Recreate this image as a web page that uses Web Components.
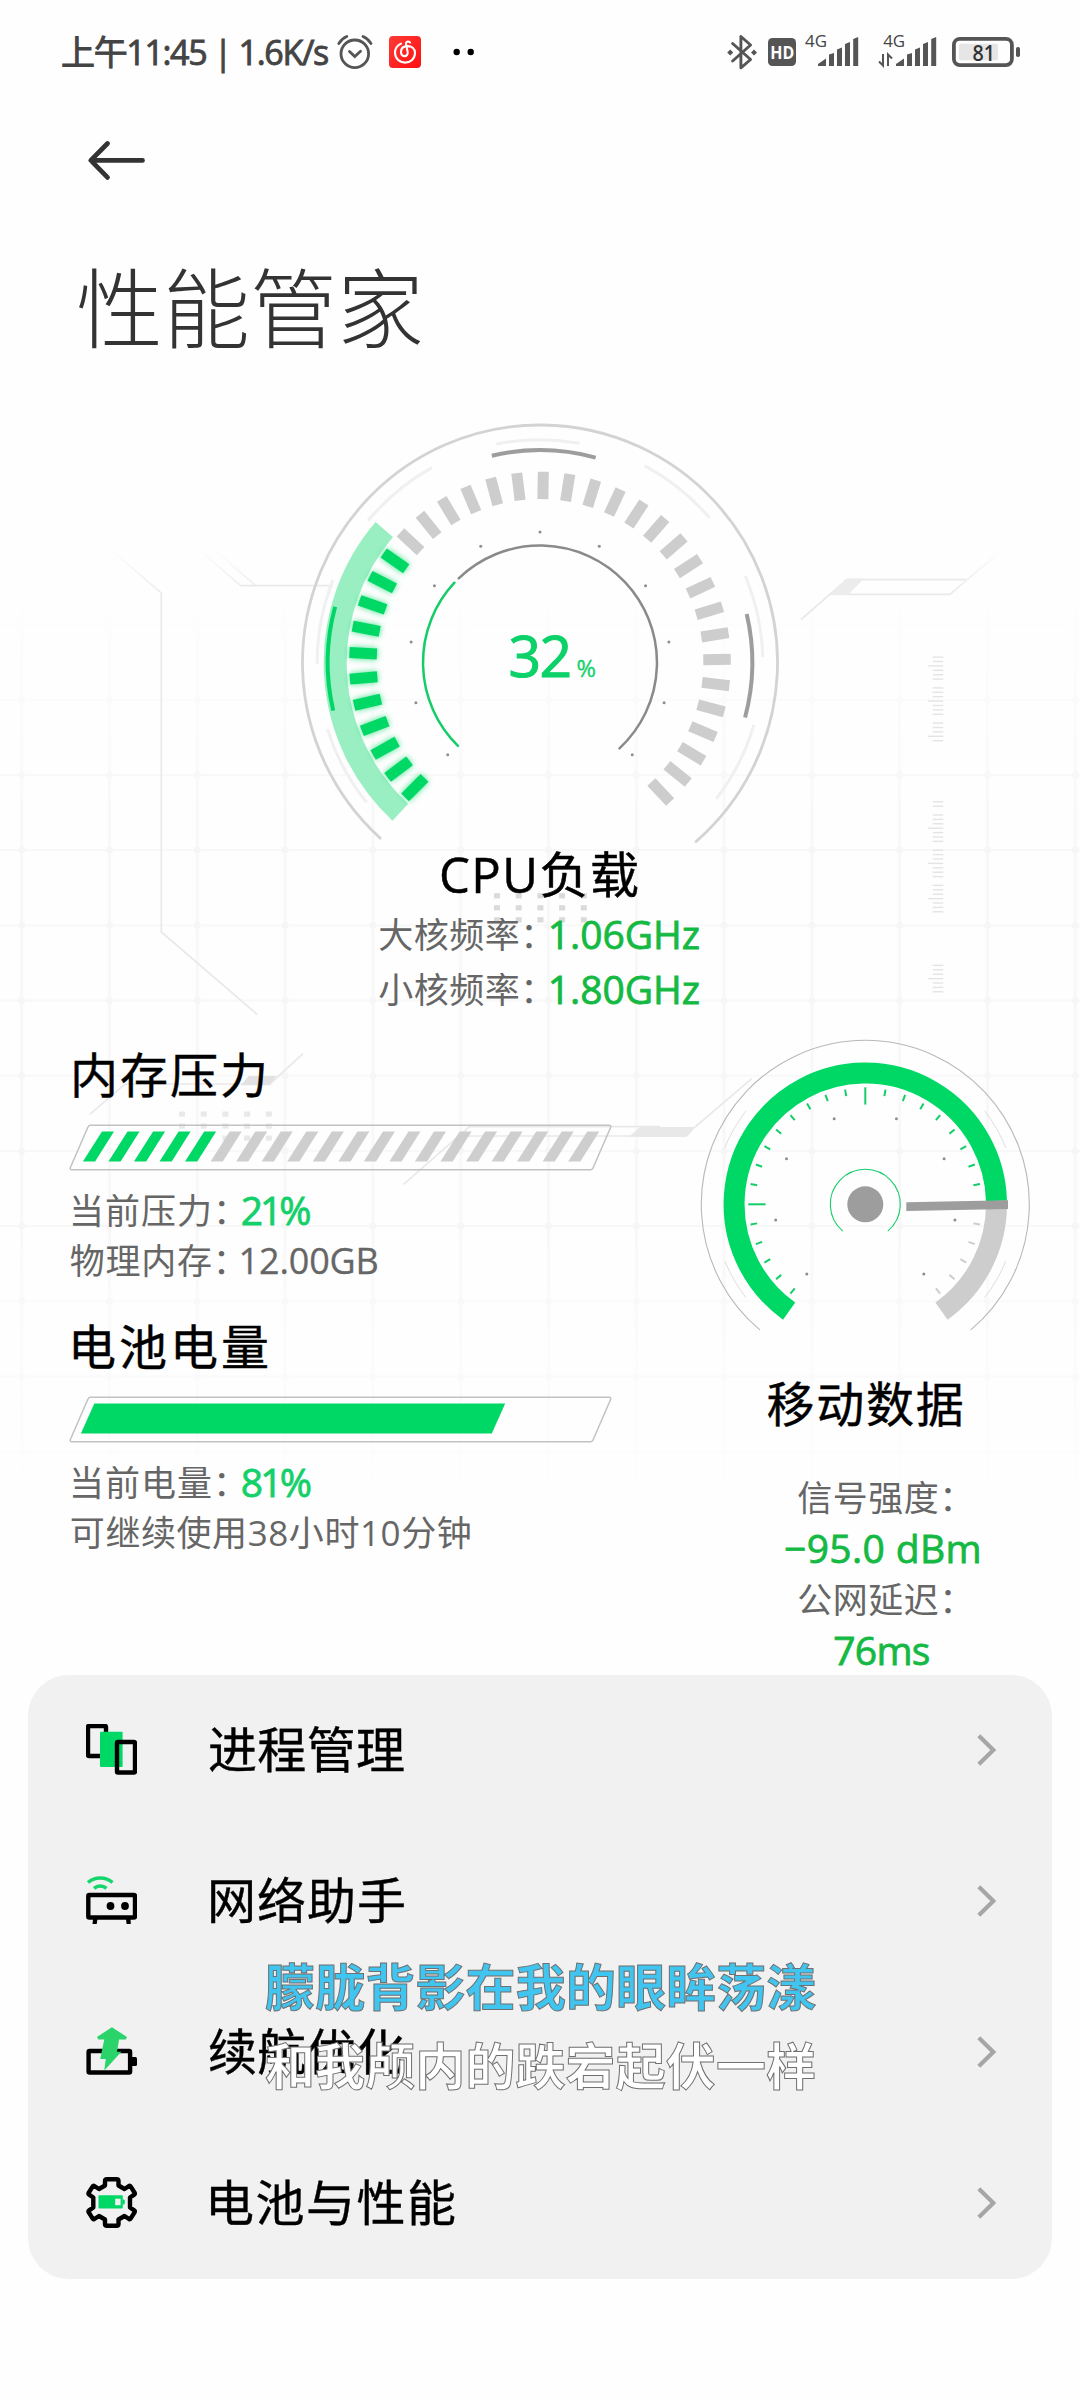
<!DOCTYPE html>
<html lang="zh-CN">
<head>
<meta charset="utf-8">
<title>性能管家</title>
<style>
html,body{margin:0;padding:0;background:#fefefe}
body{width:1080px;height:2400px;overflow:hidden;font-family:"Open Sans","Noto Sans CJK SC",sans-serif;color:#000}
</style>
</head>
<body>
<performance-page></performance-page>
<script>
const rad = a => a * Math.PI / 180;
/* polar point: angle in degrees, 0 is up, clockwise positive */
const pt = (cx, cy, r, a) => [cx + r * Math.sin(rad(a)), cy - r * Math.cos(rad(a))].map(v => +v.toFixed(2));
const arc = (cx, cy, r, a, b, stroke, w, cap = 'butt') => {
  const [x1, y1] = pt(cx, cy, r, a), [x2, y2] = pt(cx, cy, r, b);
  return `<path d="M${x1} ${y1}A${r} ${r} 0 ${b - a > 180 ? 1 : 0} 1 ${x2} ${y2}" fill="none" stroke="${stroke}" stroke-width="${w}" stroke-linecap="${cap}"/>`;
};
const spoke = (cx, cy, r1, r2, a, stroke, w, cap = 'butt') => {
  const [x1, y1] = pt(cx, cy, r1, a), [x2, y2] = pt(cx, cy, r2, a);
  return `<path d="M${x1} ${y1}L${x2} ${y2}" stroke="${stroke}" stroke-width="${w}" stroke-linecap="${cap}"/>`;
};
const dot = (cx, cy, r, a) => { const [x, y] = pt(cx, cy, r, a); return `<circle cx="${x}" cy="${y}" r="1.5" fill="#8e8e8e"/>`; };
const svg = (x, y, w, h, body) => `<svg viewBox="${x} ${y} ${w} ${h}" width="${w}" height="${h}" fill="none">${body}</svg>`;

class BaseElement extends HTMLElement {
  connectedCallback() {
    if (this.shadowRoot) return;
    this.attachShadow({ mode: 'open' }).innerHTML = `<style>:host{display:block}svg{display:block;flex:none}${this.css || ''}</style>` + this.view();
  }
}

/* One line of text whose visible ink starts at the left edge and spans w pixels. */
class InkText extends HTMLElement {
  connectedCallback() {
    if (this.shadowRoot) return;
    const w = +this.getAttribute('w');
    this.attachShadow({ mode: 'open' }).innerHTML =
      `<style>:host{display:block;flex:none;width:${w}px;white-space:pre}span{display:block}</style><span><slot></slot></span>`;
    const cs = getComputedStyle(this), ctx = InkText.ctx || (InkText.ctx = document.createElement('canvas').getContext('2d'));
    ctx.font = `${cs.fontWeight} ${cs.fontSize} ${cs.fontFamily}`;
    const text = this.textContent, m = ctx.measureText(text);
    const ink = m.actualBoundingBoxLeft + m.actualBoundingBoxRight;
    const s = this.shadowRoot.querySelector('span').style;
    s.letterSpacing = ((w - ink) / (text.length - 1)).toFixed(3) + 'px';
    s.marginLeft = m.actualBoundingBoxLeft.toFixed(2) + 'px';
  }
}
customElements.define('ink-text', InkText);

customElements.define('status-bar', class extends BaseElement {
  css = `:host{height:104px;display:flex;align-items:center;color:#444;padding-left:62px;box-sizing:border-box}
    ink-text{font-size:34px;line-height:104px;-webkit-text-stroke:.9px #444}
    .r{margin-left:auto;display:flex;padding-right:58px}
    text{font-family:"Open Sans",sans-serif}`;
  bars(x) {
    return [[0, 58.5, 61.5], [11, 53, 54.5], [19, 47.5, 49.5], [27, 42, 44], [35.2, 37, 39]].map(([d, t, l], i) =>
      `<path d="M${x + d} 66V${i ? l : 64}L${x + d + (i ? 5 : 8)} ${i ? t : 58.5}V66z" fill="#555"/>`).join('');
  }
  view() {
    return `<ink-text w="266">上午11:45 | 1.6K/s</ink-text>
    ${svg(328, 34, 56, 36, `<g stroke="#555" stroke-width="2.8" stroke-linecap="round"><circle cx="354.8" cy="53.8" r="13.8"/><path d="M338.8 43.5q3-5 8-7M371 43.5q-3-5-8-7M349.5 51.5l5.3 5 5.7-5.2"/></g>`)}
    ${svg(384, 34, 92, 36, `<defs><linearGradient id="g" x1="0" y1="0" x2="1" y2="1"><stop stop-color="#fe3a36"/><stop offset="1" stop-color="#fe0f12"/></linearGradient></defs>
      <rect x="389" y="36" width="32" height="32" rx="4" fill="url(#g)"/>
      <path d="M401 43.6c-4 2-6 5-6 9 0 6 4.5 10 10 10s10-4 10-9.5c0-4.5-3.5-7-7.5-7-5 0-6.5 3-6.5 6 0 2.5 1.5 4 3.5 4s3.5-1.7 3.2-4l-1.7-8c-.3-2.3 2-3.5 4-1.6" stroke="#fff" stroke-width="2.1" stroke-linecap="round"/>
      <circle cx="456.7" cy="52" r="3.2" fill="#000"/><circle cx="470.7" cy="52" r="3.2" fill="#000"/>`)}
    <div class="r">${svg(726, 22, 296, 60, `
      <path d="M732.6 43.5l18 16-9.7 8.300V36.500l9.700 8.500-18 16" stroke="#555" stroke-width="2.9" stroke-linejoin="round" stroke-linecap="round"/>
      <path d="M727.2 52.500l3-3 3 3-3 3zM751 52.500l3-3 3 3-3 3z" fill="#555"/>
      <rect x="768" y="38" width="28" height="28" rx="4.5" fill="#555"/>
      <text x="770.2" y="59" font-size="18" font-weight="700" fill="#fff" textLength="24" lengthAdjust="spacingAndGlyphs">HD</text>
      <text x="805" y="47" font-size="16.5" fill="#444" textLength="22" lengthAdjust="spacingAndGlyphs">4G</text>${this.bars(818)}
      <text x="883.2" y="47" font-size="16.5" fill="#444" textLength="22" lengthAdjust="spacingAndGlyphs">4G</text>${this.bars(896)}
      <path d="M883 54v11.5l-4-4M888 66V54.500l4 4" stroke="#555" stroke-width="2"/>
      <rect x="953.9" y="38.900" width="58" height="26.200" rx="6" stroke="#555" stroke-width="3.800"/>
      <rect x="959" y="43.700" width="39" height="16.600" rx="2" fill="#e6e6e6"/>
      <rect x="1016" y="47" width="4" height="10" rx="1.800" fill="#555"/>
      <text x="972.500" y="61" font-size="22" font-weight="600" fill="#333" textLength="22.500" lengthAdjust="spacingAndGlyphs">81</text>`)}</div>`;
  }
});

customElements.define('page-header', class extends BaseElement {
  css = `:host{height:296px}.nav{height:112px;padding-left:86px;display:flex;align-items:center}
    ink-text{margin-left:79px;font-size:87px;font-weight:300;line-height:176px;color:#333;font-family:"Noto Sans CJK SC",sans-serif}`;
  view() {
    return `<div class="nav">${svg(86, 138, 62, 44, `<path d="M142.500 160.400H91M107.500 143.500L90.800 160.400l16.700 17" stroke="#333" stroke-width="4.800" stroke-linecap="round" stroke-linejoin="round"/>`)}</div>
    <ink-text w="342">${this.textContent}</ink-text>`;
  }
});

customElements.define('metric-line', class extends BaseElement {
  css = `:host{display:flex;height:var(--h,50px);color:#666}
    ink-text{line-height:calc(var(--h,50px) - 2px)}
    .l{font-size:35px}.v{font-size:39px;line-height:calc(var(--h,50px) - 4px);color:var(--vc,#14b944);margin-left:var(--gap,17px);-webkit-text-stroke:.8px currentColor}
    .v.plain{font-size:36px;color:#666;line-height:calc(var(--h,50px) - 2px);-webkit-text-stroke:.3px currentColor}`;
  view() {
    const a = n => this.getAttribute(n);
    return (a('label') ? `<ink-text class="l" w="${a('lw') || 153}">${a('label')}</ink-text>` : '') +
      (a('value') ? `<ink-text class="v ${a('kind') || ''}" w="${a('vw')}" ${a('label') ? '' : 'style="margin-left:0"'}>${a('value')}</ink-text>` : '');
  }
});

customElements.define('cpu-gauge', class extends BaseElement {
  css = `:host{padding-left:280px}text{font-family:"Open Sans",sans-serif;fill:#0dd169}
    .t{margin-left:161px;font-size:49px;line-height:56px;height:57px;margin-bottom:5px;-webkit-text-stroke:.5px #000}
    metric-line{--h:55px;--gap:18.4px;margin-left:99.3px}`;
  view() {
    const X = 540, Y = 662.5; let g = '', green = '';
    g += arc(X, Y, 237.5, -137.7, 138.9, '#d3d3d3', 2.8, 'round');
    [[-128.9, -107.4], [-90.4, -68.3], [-50.5, -29], [-11.3, 10.2], [28, 49.5], [67.1, 88.6], [106.3, 127.7]].forEach(([a, b]) => g += arc(X, Y, 222.8, a, b, '#f0f0f0', 3));
    g += arc(X, Y, 212.3, -13.1, 15.2, '#9d9d9d', 4) + arc(X, Y, 212.3, 76.8, 105, '#9d9d9d', 4);
    g += arc(X, Y, 204.8, -137, -49.5, '#99efc2', 23);
    g += arc(X, Y, 212.3, -103.1, -74.8, '#00d566', 4);
    for (let i = 0; i < 35; i++) {
      const s = spoke(X, Y, 163.3, 190.8, -135 + i * 8, i < 11 ? '#00d866' : '#cdcdcd', 11);
      i < 11 ? green += s : g += s;
    }
    g += `<g filter="url(#b)" opacity=".75">${green}</g>${green}`;
    for (let i = -5; i <= 5; i++) g += dot(X, Y, 130.5, i * 27);
    g += arc(X, Y, 117, -44, 137.2, '#8a8a8a', 2.5, 'round') + arc(X, Y, 117, -135.5, -47, '#14cd69', 2.5, 'round');
    return `${svg(280, 400, 520, 446, `<defs><filter id="b" x="-20%" y="-20%" width="140%" height="140%"><feGaussianBlur stdDeviation="3"/></filter></defs>${g}
      <text x="508.5" y="677" font-size="57" textLength="63.5" stroke="#0dd169" stroke-width="1.1">32</text><text x="576.5" y="677.3" font-size="23.5" stroke="#0dd169" stroke-width=".3">%</text>`)}
      <ink-text class="t" w="197">CPU负载</ink-text>
      <metric-line label="大核频率：" value="1.06GHz" vw="148"></metric-line>
      <metric-line label="小核频率：" value="1.80GHz" vw="148"></metric-line>`;
  }
});

customElements.define('meter-block', class extends BaseElement {
  css = `:host{height:272px;box-sizing:border-box;padding-top:27.5px;--vc:#14d06a;--gap:16.8px}
    .t{margin-left:74px;font-size:48px;height:60px;line-height:58px;-webkit-text-stroke:.4px #000}
    ::slotted(metric-line){margin-left:71.8px}`;
  view() {
    let g = `<path d="M90.5 19.2H609q2.5 0 1.5 2.5L593 62q-.8 1.800-2.500 1.800H72q-2.500 0-1.500-2.500L88 21q.8-1.800 2.500-1.800z" stroke="#c2c2c2" stroke-width="1.500"/>`;
    if (this.getAttribute('type') === 'ticks')
      for (let i = 0; i < 20; i++) { const x = 82.9 + i * 25.54; g += `<path d="M${x} 55.5L${x + 19.1} 25.5h12L${x + 12.2} 55.5z" fill="${i < 5 ? '#00d866' : '#cecece'}"/>`; }
    else g += `<path d="M94.3 25.5H505.2L491.8 55.5H80.9z" fill="#00d866"/>`;
    return `<ink-text class="t" w="${this.getAttribute('tw')}">${this.getAttribute('name')}</ink-text>${svg(0, 0, 640, 81, g)}<slot></slot>`;
  }
});

customElements.define('network-gauge', class extends BaseElement {
  css = `.t{margin:29.5px 0 38px 117.5px;font-size:48px;height:60px;line-height:58px;-webkit-text-stroke:.4px #000}
    metric-line{--h:51px;--vc:#14b944}`;
  view() {
    const X = 865.3, Y = 1204.3;
    let g = arc(X, Y, 164, -140, 140, '#b8b8b8', 1.1);
    [[-128, -112], [-68.3, -51.9], [51.9, 68.3], [112, 128]].forEach(([a, b]) => g += arc(X, Y, 151.5, a, b, '#dedede', 1));
    g += arc(X, Y, 131.2, 88, 144.5, '#cdcdcd', 21) + arc(X, Y, 131.2, -144.5, 88.5, '#00d866', 21);
    for (let a = -140; a <= 140; a += 10) {
      if (a === 90) continue;
      g += a % 90 ? spoke(X, Y, 109.8, 116.5, a, a > 90 ? '#cdcdcd' : '#14cd69', 2) : spoke(X, Y, 99.7, 117, a, '#14cd69', 2);
    }
    for (let a = -140; a <= 140; a += 40) g += dot(X, Y, 91, a);
    g += arc(X, Y, 35, -140, 140, '#14cd69', 1.1) + `<circle cx="${X}" cy="${Y}" r="18" fill="#9d9d9d"/>`;
    g += `<path d="M906.3 1202.3L1008 1200.3V1209L906.3 1211z" fill="#9d9d9d"/>`;
    return `${svg(650, 1018, 430, 327, g)}<ink-text class="t" w="194.3">移动数据</ink-text>
      <metric-line style="margin-left:148.3px" label="信号强度："></metric-line>
      <metric-line style="margin-left:135px" value="−95.0 dBm" vw="193.500"></metric-line>
      <metric-line style="margin-left:148.3px" label="公网延迟："></metric-line>
      <metric-line style="margin-left:184.3px" value="76ms" vw="94.500"></metric-line>`;
  }
});

const icons = {
  process: `<rect x="2" y="2" width="18" height="30" rx="1" stroke="#000" stroke-width="4.4"/><rect x="14" y="7.7" width="22.600" height="35.300" rx="1" fill="#00d866"/><rect x="31" y="18" width="18" height="30.500" rx="1" stroke="#000" stroke-width="4.400"/>`,
  router: `<path d="M2 7.500C9 1.500 19.500 1.500 26.500 7.500M8 13.300c3.500-3 9-3 12.500 0" stroke="#14d66c" stroke-width="3.500"/><rect x="2.300" y="20" width="46.700" height="22.500" rx="1" stroke="#000" stroke-width="4.400"/><circle cx="24.500" cy="31" r="3.900" fill="#000"/><circle cx="39" cy="31" r="3.900" fill="#000"/><path d="M7 44h4.500l-.8 5H6.500zM40 44h4.500l.3 5h-4.200z" fill="#000"/>`,
  charge: `<rect x="2.600" y="25" width="41.500" height="21.500" rx="1" stroke="#000" stroke-width="4.400"/><path d="M46 31h3.500q1.500 0 1.500 1.500v6q0 1.500-1.500 1.500H46z" fill="#000"/><path d="M25.900 1.200L41 11l-1.200 2.400h-6.700L31 25.700h4.400L18.300 44.400 19.700 33h-5.500l4.100-19.600h-6L11 11z" fill="#2ad46b"/>`,
  gear: `<path d="M19 4q0-1.800 2-1.800h9.500q2 0 2 1.800V8.500L38.500 12 43 9q1-.6 1.600.4l4 6.300q.6 1.200-.4 1.900L44 20.500v10l4.200 2.900q1 .7.400 1.900l-4 6.300q-.6 1-1.600.4L38.500 39 32.500 42.500V47q0 1.800-2 1.800H21q-2 0-2-1.800V42.500L13 39 8.300 42q-1 .6-1.600-.4l-4-6.300q-.6-1.200.4-1.900L7.300 30.500v-10L3.100 17.600q-1-.7-.4-1.900l4-6.300q.6-1 1.600-.4L13 12l6-3.500z" stroke="#000" stroke-width="4.400" stroke-linejoin="round"/><rect x="12.500" y="18.300" width="24.300" height="13.200" rx="1" fill="#00d866"/><rect x="29.200" y="21.700" width="5.400" height="6.500" fill="#f1f1f1"/><rect x="36.500" y="22.500" width="2.300" height="5" rx="1" fill="#00d866"/>`
};
customElements.define('menu-item', class extends BaseElement {
  css = `:host{display:flex;align-items:center;height:151px;box-sizing:border-box;padding:0 55px 1.5px 58px}
    ink-text{margin-left:var(--x,73px);font-size:49px;line-height:149px;-webkit-text-stroke:.4px #000}.c{margin-left:auto}`;
  view() {
    return `${svg(0, 0, 51, 51, icons[this.getAttribute('icon')])}<ink-text w="${this.getAttribute('w')}">${this.getAttribute('name')}</ink-text>
      <svg class="c" width="22" height="34" viewBox="0 0 22 34" fill="none"><path d="M3.800 2.800L18.300 17 3.800 31.200" stroke="#a6a6a6" stroke-width="4.200"/></svg>`;
  }
});
customElements.define('menu-card', class extends BaseElement {
  css = `:host{margin:0 28px;background:#f1f1f1;border-radius:41px;height:604px}`;
  view() { return '<slot></slot>'; }
});

customElements.define('floating-lyrics', class extends BaseElement {
  css = `:host{position:absolute;left:266px;top:1945px;width:551px;font-family:"Noto Sans CJK SC",sans-serif;font-weight:700;font-size:50px;line-height:79px;-webkit-text-stroke:1px #707070}
    .a{color:#40c4f0}.b{color:#fff}`;
  view() { return `<ink-text class="a" w="549.5">朦胧背影在我的眼眸荡漾</ink-text><ink-text class="b" w="549">和我颅内的跌宕起伏一样</ink-text>`; }
});

customElements.define('tech-backdrop', class extends BaseElement {
  view() {
    let grid = '', s = '';
    for (let x = 21.7; x < 1080; x += 87.8) grid += `<path d="M${x} 590V1500" stroke="#f8f8f8" stroke-width="3"/>`;
    for (let y = 624.5; y < 1500; y += 75.2) {
      grid += `<path d="M0 ${y}H1080" stroke="#f8f8f8" stroke-width="2"/>`;
      for (let x = 21.7; x < 1080; x += 87.8) grid += `<circle cx="${x}" cy="${y}" r="3.5" fill="#f6f6f6"/>`;
    }
    const L = d => `<path d="${d}" stroke="#e9e9e9" stroke-width="1.7"/>`;
    s += L('M161.3 593V932l96 82.6') + L('M240.7 585.7H332.7');
    s += `<g stroke="url(#f)" stroke-width="1.6"><path d="M110 549l51.3 44M198.3 549l42.4 36.7M214.3 550l41.7 35.7"/></g>`;
    s += L('M801 619.6L846.7 579.6H965.7M830 594.3H950') + `<path d="M950 594.3l45.3-38.6" stroke="url(#f)" stroke-width="1.6"/><path d="M846.7 578.6h17.3l-16 16.4h-18.7z" fill="#ececec"/>`;
    const ruler = (y0, n, long, gap) => { for (let k = 0; k < n; k++) if (k % 8 !== gap) s += `<path d="M${k % 8 === long ? 928 : 932.7} ${y0 + k * 4.4}H943.3" stroke="#e4e4e4" stroke-width="1.4"/>`; };
    ruler(657.1, 20, 2, 6); ruler(801.8, 26, 6, 2); ruler(965.4, 7, 3, 7);
    const dots = (x, y, c) => { for (let i = 0; i < 5; i++) for (let j = 0; j < 3; j++) s += `<rect x="${x + i * 21.7 - 3}" y="${y + j * 12 - 2.5}" width="6" height="5.2" fill="${c}"/>`; };
    dots(497, 895.7, '#dadada'); dots(182, 1114, '#e9e9e9');
    s += L('M89.7 1114.3L125 1084H249M269 1085l34-31.3') + `<path d="M248.6 1076h28l-7.7 9.2H241z" fill="#e2e2e2"/>`;
    s += L('M403.6 1184.3L469.4 1126.7H660M459 1136H632M695 1127l56.7-48.3');
    s += `<path d="M640 1127H695.5L686.7 1137H629z" fill="#e8e8e8"/>`;
    return svg(0, 0, 1080, 1675, `<defs><linearGradient id="f" gradientUnits="userSpaceOnUse" x1="0" y1="548" x2="0" y2="594"><stop stop-color="#fefefe"/><stop offset="1" stop-color="#e9e9e9"/></linearGradient>
      <linearGradient id="m" gradientUnits="userSpaceOnUse" x1="0" y1="590" x2="0" y2="1500"><stop stop-color="#000"/><stop offset=".25" stop-color="#fff"/><stop offset=".7" stop-color="#fff"/><stop offset="1" stop-color="#000"/></linearGradient>
      <mask id="k" maskUnits="userSpaceOnUse" x="0" y="580" width="1080" height="940"><rect x="0" y="590" width="1080" height="910" fill="url(#m)"/></mask></defs>
      <g mask="url(#k)">${grid}</g>${s}`);
  }
});

customElements.define('performance-page', class extends BaseElement {
  css = `:host{display:grid;width:1080px;height:2400px;position:relative;background:#fefefe;overflow:hidden}
    tech-backdrop,main{grid-area:1/1;min-width:0}
    .stats{display:grid;grid-template-columns:650px 430px;height:657px}`;
  view() {
    return `<tech-backdrop></tech-backdrop>
    <main>
      <status-bar></status-bar>
      <page-header>性能管家</page-header>
      <cpu-gauge></cpu-gauge>
      <section class="stats">
        <div>
          <meter-block type="ticks" name="内存压力" tw="190">
            <metric-line style="margin-left:73px" label="当前压力：" lw="152" value="21%" vw="68.5"></metric-line>
            <metric-line style="margin-left:70.8px" label="物理内存：" lw="154" kind="plain" value="12.00GB" vw="136"></metric-line>
          </meter-block>
          <meter-block name="电池电量" tw="193">
            <metric-line style="margin-left:73px" label="当前电量：" lw="152" value="81%" vw="69"></metric-line>
            <metric-line style="margin-left:70.8px" label="可继续使用38小时10分钟" lw="399"></metric-line>
          </meter-block>
        </div>
        <network-gauge></network-gauge>
      </section>
      <menu-card>
        <menu-item icon="process" name="进程管理" w="195" style="--x:72px"></menu-item>
        <menu-item icon="router" name="网络助手" w="193" style="--x:74px"></menu-item>
        <menu-item icon="charge" name="续航优化" w="195" style="--x:72px"></menu-item>
        <menu-item icon="gear" name="电池与性能" w="244" style="--x:74px"></menu-item>
      </menu-card>
    </main>
    <floating-lyrics></floating-lyrics>`;
  }
});
</script>
</body>
</html>
